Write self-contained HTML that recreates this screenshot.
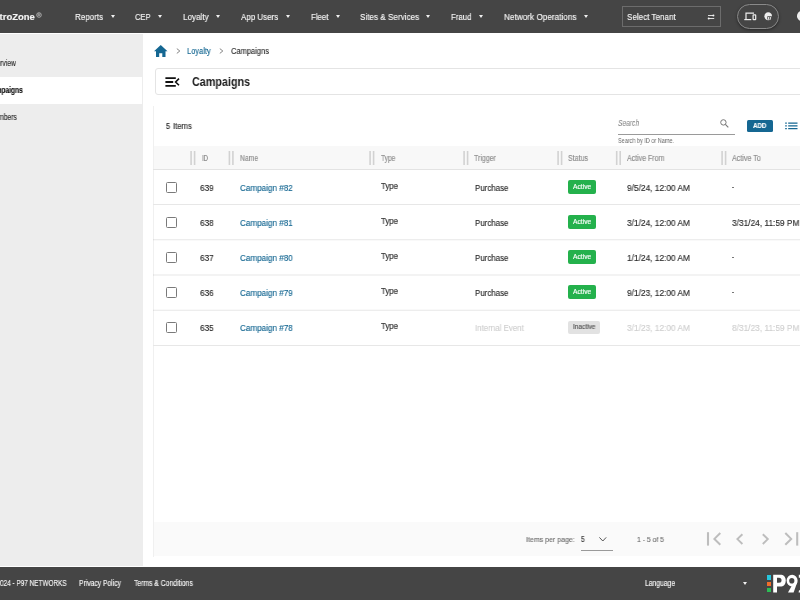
<!DOCTYPE html>
<html><head><meta charset="utf-8"><style>
html,body{margin:0;padding:0;}
body{width:800px;height:600px;overflow:hidden;position:relative;background:#fff;font-family:"Liberation Sans",sans-serif;}
.t{position:absolute;line-height:0;white-space:nowrap;font-family:"Liberation Sans",sans-serif;transform-origin:0 0;will-change:transform;}
.tri{position:absolute;width:0;height:0;border-left:2.2px solid transparent;border-right:2.2px solid transparent;border-top:3.2px solid #f0f0f0;}
</style></head><body>
<div style="position:absolute;left:0px;top:0px;width:800px;height:33px;background:#454545;"></div>
<div style="position:absolute;left:0px;top:34px;width:142.6px;height:532px;background:#ededed;"></div>
<div style="position:absolute;left:0px;top:77px;width:142px;height:27px;background:#fff;"></div>
<div style="position:absolute;left:0px;top:567px;width:800px;height:33px;background:#454545;"></div>
<div class="t" style="left:-11.79px;top:17.00px;font-size:9.45px;color:#f4f4f4;transform:scaleX(1.0044);font-weight:700;-webkit-text-stroke:0.15px #f4f4f4;">PetroZone</div>
<svg style="position:absolute;left:35.5px;top:12.3px" width="6" height="6" viewBox="0 0 6 6"><circle cx="3" cy="3" r="2.3" stroke="#ccc" stroke-width="0.7" fill="none"/><path d="M2.2 4.2V1.8h1a0.65 0.65 0 0 1 0 1.3h-1M3.1 3.1l0.9 1.1" stroke="#ccc" stroke-width="0.55" fill="none"/></svg>
<div class="t" style="left:74.70px;top:17.00px;font-size:9.74px;color:#f4f4f4;transform:scaleX(0.8243);-webkit-text-stroke:0.15px #f4f4f4;">Reports</div>
<div class="tri" style="left:110.9px;top:15px;"></div>
<div class="t" style="left:135.00px;top:17.00px;font-size:9.74px;color:#f4f4f4;transform:scaleX(0.7725);-webkit-text-stroke:0.15px #f4f4f4;">CEP</div>
<div class="tri" style="left:158px;top:15px;"></div>
<div class="t" style="left:182.50px;top:17.00px;font-size:9.74px;color:#f4f4f4;transform:scaleX(0.8340);-webkit-text-stroke:0.15px #f4f4f4;">Loyalty</div>
<div class="tri" style="left:215.75px;top:15px;"></div>
<div class="t" style="left:240.75px;top:17.00px;font-size:9.74px;color:#f4f4f4;transform:scaleX(0.8189);-webkit-text-stroke:0.15px #f4f4f4;">App Users</div>
<div class="tri" style="left:286.25px;top:15px;"></div>
<div class="t" style="left:310.50px;top:17.00px;font-size:9.74px;color:#f4f4f4;transform:scaleX(0.8057);-webkit-text-stroke:0.15px #f4f4f4;">Fleet</div>
<div class="tri" style="left:335.75px;top:15px;"></div>
<div class="t" style="left:360.00px;top:17.00px;font-size:9.74px;color:#f4f4f4;transform:scaleX(0.8356);-webkit-text-stroke:0.15px #f4f4f4;">Sites &amp; Services</div>
<div class="tri" style="left:426px;top:15px;"></div>
<div class="t" style="left:450.75px;top:17.00px;font-size:9.74px;color:#f4f4f4;transform:scaleX(0.8064);-webkit-text-stroke:0.15px #f4f4f4;">Fraud</div>
<div class="tri" style="left:479.25px;top:15px;"></div>
<div class="t" style="left:503.75px;top:17.00px;font-size:9.74px;color:#f4f4f4;transform:scaleX(0.8420);-webkit-text-stroke:0.15px #f4f4f4;">Network Operations</div>
<div class="tri" style="left:583.75px;top:15px;"></div>
<div style="position:absolute;left:621.5px;top:6px;width:99.5px;height:20.5px;border:1px solid #6c6c6c;box-sizing:border-box;"></div>
<div class="t" style="left:626.90px;top:17.00px;font-size:9.59px;color:#f4f4f4;transform:scaleX(0.8408);-webkit-text-stroke:0.15px #f4f4f4;">Select Tenant</div>
<svg style="position:absolute;left:706px;top:13px" width="10" height="8" viewBox="0 0 10 8"><path d="M2 2.5h5.8M2.4 5.5H8.2" stroke="#eee" stroke-width="0.9" fill="none"/><circle cx="7.4" cy="2.5" r="1" fill="#f4f4f4"/><circle cx="2.7" cy="5.5" r="1" fill="#f4f4f4"/></svg>
<div style="position:absolute;left:737.25px;top:3.75px;width:41.25px;height:25.25px;box-sizing:border-box;border:1px solid #8a8a8a;border-radius:13px;box-shadow:0 1px 3px rgba(0,0,0,0.45);background:#454545"></div>
<svg style="position:absolute;left:744px;top:12px" width="13" height="9" viewBox="0 0 13 9"><path d="M2 7V1.2h8" stroke="#eee" stroke-width="1.2" fill="none"/><path d="M0.3 7.6h7" stroke="#eee" stroke-width="1.2"/><rect x="9.1" y="2.8" width="2.6" height="4.9" rx="0.5" stroke="#eee" stroke-width="1.2" fill="none"/></svg>
<svg style="position:absolute;left:763.5px;top:12px" width="9" height="9" viewBox="0 0 9 9"><path d="M4.2 0.3C6.5 0.3 8 2 8 4.2 8 6.5 6.5 8.2 4.2 8.2 2 8.2 0.4 6.3 0.4 4.2 0.4 2 2 0.3 4.2 0.3Z" fill="#eee"/><path d="M3.3 4.3h4.6v3.2h-4.6z" fill="#454545"/><path d="M4.1 5.1h1v2.4h-1zM5.8 5.1h1v2.4h-1z" fill="#eee"/></svg>
<div style="position:absolute;left:797px;top:11.2px;width:9.5px;height:9.5px;border-radius:50%;background:#eee"></div>
<div class="t" style="left:-12.17px;top:64.00px;font-size:8.20px;color:#2a2a2a;transform:scaleX(0.8130);-webkit-text-stroke:0.15px #2a2a2a;">Overview</div>
<div class="t" style="left:-12.82px;top:91.00px;font-size:8.20px;color:#111;transform:scaleX(0.8105);font-weight:700;-webkit-text-stroke:0.15px #111;">Campaigns</div>
<div class="t" style="left:-10.80px;top:118.00px;font-size:8.20px;color:#2a2a2a;transform:scaleX(0.8130);-webkit-text-stroke:0.15px #2a2a2a;">Members</div>
<svg style="position:absolute;left:154px;top:44.8px" width="13.5" height="12" viewBox="0 0 13.5 12"><path d="M6.75 0L13.5 6.2h-2V12H8.3V8.2H5.2V12H2V6.2H0z" fill="#156792"/></svg>
<svg style="position:absolute;left:175.5px;top:48px" width="5" height="6" viewBox="0 0 5 6"><path d="M0.8 0.6l3 2.4-3 2.4" stroke="#777" stroke-width="0.9" fill="none"/></svg>
<div class="t" style="left:187.40px;top:51.00px;font-size:9.30px;color:#156792;transform:scaleX(0.8039);-webkit-text-stroke:0.15px #156792;">Loyalty</div>
<svg style="position:absolute;left:219.4px;top:48px" width="5" height="6" viewBox="0 0 5 6"><path d="M0.8 0.6l3 2.4-3 2.4" stroke="#777" stroke-width="0.9" fill="none"/></svg>
<div class="t" style="left:231.30px;top:51.00px;font-size:9.30px;color:#333;transform:scaleX(0.8054);-webkit-text-stroke:0.15px #333;">Campaigns</div>
<div style="position:absolute;left:154.5px;top:68px;width:665.5px;height:26.599999999999994px;border:1px solid #e4e4e4;border-radius:3px;box-sizing:border-box;"></div>
<svg style="position:absolute;left:165px;top:77px" width="15" height="11" viewBox="0 0 15 11"><path d="M0.4 1.1h10.4M0.4 5.0h7.8M0.4 8.9h10.4" stroke="#111" stroke-width="1.8"/><path d="M14 1.6L10.6 5.0 14 8.3" stroke="#111" stroke-width="1.6" fill="none"/></svg>
<div class="t" style="left:191.80px;top:82.00px;font-size:11.92px;color:#1a1a1a;transform:scaleX(0.9059);font-weight:700;">Campaigns</div>
<div style="position:absolute;left:153px;top:106px;width:1px;height:451px;background:#f0f0f0;"></div>
<div class="t" style="left:165.90px;top:126.00px;font-size:8.43px;color:#2a2a2a;transform:scaleX(0.8685);-webkit-text-stroke:0.15px #2a2a2a;">5</div>
<div class="t" style="left:173.40px;top:126.00px;font-size:8.43px;color:#2a2a2a;transform:scaleX(0.9091);-webkit-text-stroke:0.15px #2a2a2a;">Items</div>
<div class="t" style="left:617.80px;top:123.00px;font-size:8.58px;color:#858585;transform:scaleX(0.7758);font-style:italic;-webkit-text-stroke:0.05px #858585;">Search</div>
<svg style="position:absolute;left:720px;top:118.8px" width="9" height="9" viewBox="0 0 9 9"><circle cx="3.4" cy="3.4" r="2.7" stroke="#777" stroke-width="1" fill="none"/><path d="M5.4 5.4L8.3 8.3" stroke="#777" stroke-width="1.1"/></svg>
<div style="position:absolute;left:617.8px;top:133.5px;width:117.40000000000009px;height:1.0px;background:#9a9a9a;"></div>
<div class="t" style="left:617.80px;top:141.00px;font-size:7.27px;color:#6a6a6a;transform:scaleX(0.7588);">Search by ID or Name.</div>
<div style="position:absolute;left:746.8px;top:119.9px;width:25.8px;height:11.9px;background:#156792;border-radius:1.5px"></div>
<div class="t" style="left:752.90px;top:126.00px;font-size:6.83px;color:#fff;transform:scaleX(0.9041);font-weight:700;-webkit-text-stroke:0.15px #fff;">ADD</div>
<svg style="position:absolute;left:785px;top:122px" width="13" height="8" viewBox="0 0 13 8"><path d="M0.2 1.1h1.6M0.2 3.85h1.6M0.2 6.6h1.6M3.2 1.1h9.3M3.2 3.85h9.3M3.2 6.6h9.3" stroke="#156792" stroke-width="1.15"/></svg>
<div style="position:absolute;left:153.6px;top:146.3px;width:646.4px;height:22.69999999999999px;background:#f8f8f8;"></div>
<div style="position:absolute;left:153.3px;top:169px;width:646.7px;height:1px;background:#e3e3e3;"></div>
<svg style="position:absolute;left:150px;top:0px" width="650" height="170" viewBox="0 0 650 170"><rect x="40.30" y="151" width="1.6" height="14" fill="#d2d2d2"/><rect x="43.80" y="151" width="1.6" height="14" fill="#d2d2d2"/><rect x="78.60" y="151" width="1.6" height="14" fill="#d2d2d2"/><rect x="82.10" y="151" width="1.6" height="14" fill="#d2d2d2"/><rect x="219.30" y="151" width="1.6" height="14" fill="#d2d2d2"/><rect x="222.80" y="151" width="1.6" height="14" fill="#d2d2d2"/><rect x="313.30" y="151" width="1.6" height="14" fill="#d2d2d2"/><rect x="316.80" y="151" width="1.6" height="14" fill="#d2d2d2"/><rect x="407.30" y="151" width="1.6" height="14" fill="#d2d2d2"/><rect x="410.80" y="151" width="1.6" height="14" fill="#d2d2d2"/><rect x="465.90" y="151" width="1.6" height="14" fill="#d2d2d2"/><rect x="469.40" y="151" width="1.6" height="14" fill="#d2d2d2"/><rect x="571.30" y="151" width="1.6" height="14" fill="#d2d2d2"/><rect x="574.80" y="151" width="1.6" height="14" fill="#d2d2d2"/></svg>
<div class="t" style="left:202.00px;top:159.00px;font-size:8.28px;color:#8c8c8c;transform:scaleX(0.7246);-webkit-text-stroke:0.15px #8c8c8c;">ID</div>
<div class="t" style="left:239.80px;top:159.00px;font-size:8.28px;color:#8c8c8c;transform:scaleX(0.8232);-webkit-text-stroke:0.15px #8c8c8c;">Name</div>
<div class="t" style="left:381.00px;top:159.00px;font-size:8.28px;color:#8c8c8c;transform:scaleX(0.8014);-webkit-text-stroke:0.15px #8c8c8c;">Type</div>
<div class="t" style="left:474.40px;top:159.00px;font-size:8.28px;color:#8c8c8c;transform:scaleX(0.8489);-webkit-text-stroke:0.15px #8c8c8c;">Trigger</div>
<div class="t" style="left:568.00px;top:159.00px;font-size:8.28px;color:#8c8c8c;transform:scaleX(0.8535);-webkit-text-stroke:0.15px #8c8c8c;">Status</div>
<div class="t" style="left:626.60px;top:159.00px;font-size:8.28px;color:#8c8c8c;transform:scaleX(0.8474);-webkit-text-stroke:0.15px #8c8c8c;">Active From</div>
<div class="t" style="left:732.10px;top:159.00px;font-size:8.28px;color:#8c8c8c;transform:scaleX(0.8610);-webkit-text-stroke:0.15px #8c8c8c;">Active To</div>
<div style="position:absolute;left:153.3px;top:204px;width:646.7px;height:1px;background:#e7e7e7;"></div>
<div style="position:absolute;left:165.8px;top:182px;width:11.2px;height:11.2px;box-sizing:border-box;border:1.4px solid #7a7a7a;border-radius:1.5px"></div>
<div class="t" style="left:200.00px;top:188.00px;font-size:9.30px;color:#2a2a2a;transform:scaleX(0.8851);-webkit-text-stroke:0.15px #2a2a2a;">639</div>
<div class="t" style="left:239.80px;top:188.00px;font-size:9.30px;color:#156792;transform:scaleX(0.8716);-webkit-text-stroke:0.15px #156792;">Campaign #82</div>
<div class="t" style="left:381.00px;top:186.00px;font-size:9.30px;color:#333;transform:scaleX(0.8422);-webkit-text-stroke:0.2px #333;">Type</div>
<div class="t" style="left:474.60px;top:188.00px;font-size:9.30px;color:#2a2a2a;transform:scaleX(0.8508);-webkit-text-stroke:0.15px #2a2a2a;">Purchase</div>
<div style="position:absolute;left:568px;top:180.4px;width:27.6px;height:13.2px;background:#24b14c;border-radius:2px"></div>
<div class="t" style="left:573.00px;top:187.00px;font-size:6.69px;color:#fff;transform:scaleX(0.9898);-webkit-text-stroke:0.15px #fff;">Active</div>
<div class="t" style="left:627.00px;top:188.00px;font-size:9.30px;color:#2a2a2a;transform:scaleX(0.8958);-webkit-text-stroke:0.15px #2a2a2a;">9/5/24, 12:00 AM</div>
<div style="position:absolute;left:732.4px;top:187px;width:1.8999999999999773px;height:1px;background:#777;"></div>
<div style="position:absolute;left:153.3px;top:239px;width:646.7px;height:1px;background:rgba(0,0,0,0.071);"></div>
<div style="position:absolute;left:153.3px;top:240px;width:646.7px;height:1px;background:rgba(0,0,0,0.024);"></div>
<div style="position:absolute;left:165.8px;top:217px;width:11.2px;height:11.2px;box-sizing:border-box;border:1.4px solid #7a7a7a;border-radius:1.5px"></div>
<div class="t" style="left:200.00px;top:223.00px;font-size:9.30px;color:#2a2a2a;transform:scaleX(0.8851);-webkit-text-stroke:0.15px #2a2a2a;">638</div>
<div class="t" style="left:239.80px;top:223.00px;font-size:9.30px;color:#156792;transform:scaleX(0.8716);-webkit-text-stroke:0.15px #156792;">Campaign #81</div>
<div class="t" style="left:381.00px;top:221.00px;font-size:9.30px;color:#333;transform:scaleX(0.8422);-webkit-text-stroke:0.2px #333;">Type</div>
<div class="t" style="left:474.60px;top:223.00px;font-size:9.30px;color:#2a2a2a;transform:scaleX(0.8508);-webkit-text-stroke:0.15px #2a2a2a;">Purchase</div>
<div style="position:absolute;left:568px;top:215.4px;width:27.6px;height:13.2px;background:#24b14c;border-radius:2px"></div>
<div class="t" style="left:573.00px;top:222.00px;font-size:6.69px;color:#fff;transform:scaleX(0.9898);-webkit-text-stroke:0.15px #fff;">Active</div>
<div class="t" style="left:627.00px;top:223.00px;font-size:9.30px;color:#2a2a2a;transform:scaleX(0.8958);-webkit-text-stroke:0.15px #2a2a2a;">3/1/24, 12:00 AM</div>
<div class="t" style="left:732.10px;top:223.00px;font-size:9.30px;color:#2a2a2a;transform:scaleX(0.8958);-webkit-text-stroke:0.15px #2a2a2a;">3/31/24, 11:59 PM</div>
<div style="position:absolute;left:153.3px;top:274px;width:646.7px;height:1px;background:rgba(0,0,0,0.047);"></div>
<div style="position:absolute;left:153.3px;top:275px;width:646.7px;height:1px;background:rgba(0,0,0,0.047);"></div>
<div style="position:absolute;left:165.8px;top:252px;width:11.2px;height:11.2px;box-sizing:border-box;border:1.4px solid #7a7a7a;border-radius:1.5px"></div>
<div class="t" style="left:200.00px;top:258.00px;font-size:9.30px;color:#2a2a2a;transform:scaleX(0.8851);-webkit-text-stroke:0.15px #2a2a2a;">637</div>
<div class="t" style="left:239.80px;top:258.00px;font-size:9.30px;color:#156792;transform:scaleX(0.8716);-webkit-text-stroke:0.15px #156792;">Campaign #80</div>
<div class="t" style="left:381.00px;top:256.00px;font-size:9.30px;color:#333;transform:scaleX(0.8422);-webkit-text-stroke:0.2px #333;">Type</div>
<div class="t" style="left:474.60px;top:258.00px;font-size:9.30px;color:#2a2a2a;transform:scaleX(0.8508);-webkit-text-stroke:0.15px #2a2a2a;">Purchase</div>
<div style="position:absolute;left:568px;top:250.4px;width:27.6px;height:13.2px;background:#24b14c;border-radius:2px"></div>
<div class="t" style="left:573.00px;top:257.00px;font-size:6.69px;color:#fff;transform:scaleX(0.9898);-webkit-text-stroke:0.15px #fff;">Active</div>
<div class="t" style="left:627.00px;top:258.00px;font-size:9.30px;color:#2a2a2a;transform:scaleX(0.8958);-webkit-text-stroke:0.15px #2a2a2a;">1/1/24, 12:00 AM</div>
<div style="position:absolute;left:732.4px;top:257px;width:1.8999999999999773px;height:1px;background:#777;"></div>
<div style="position:absolute;left:153.3px;top:309px;width:646.7px;height:1px;background:rgba(0,0,0,0.024);"></div>
<div style="position:absolute;left:153.3px;top:310px;width:646.7px;height:1px;background:rgba(0,0,0,0.071);"></div>
<div style="position:absolute;left:165.8px;top:287px;width:11.2px;height:11.2px;box-sizing:border-box;border:1.4px solid #7a7a7a;border-radius:1.5px"></div>
<div class="t" style="left:200.00px;top:293.00px;font-size:9.30px;color:#2a2a2a;transform:scaleX(0.8851);-webkit-text-stroke:0.15px #2a2a2a;">636</div>
<div class="t" style="left:239.80px;top:293.00px;font-size:9.30px;color:#156792;transform:scaleX(0.8716);-webkit-text-stroke:0.15px #156792;">Campaign #79</div>
<div class="t" style="left:381.00px;top:291.00px;font-size:9.30px;color:#333;transform:scaleX(0.8422);-webkit-text-stroke:0.2px #333;">Type</div>
<div class="t" style="left:474.60px;top:293.00px;font-size:9.30px;color:#2a2a2a;transform:scaleX(0.8508);-webkit-text-stroke:0.15px #2a2a2a;">Purchase</div>
<div style="position:absolute;left:568px;top:285.4px;width:27.6px;height:13.2px;background:#24b14c;border-radius:2px"></div>
<div class="t" style="left:573.00px;top:292.00px;font-size:6.69px;color:#fff;transform:scaleX(0.9898);-webkit-text-stroke:0.15px #fff;">Active</div>
<div class="t" style="left:627.00px;top:293.00px;font-size:9.30px;color:#2a2a2a;transform:scaleX(0.8958);-webkit-text-stroke:0.15px #2a2a2a;">9/1/23, 12:00 AM</div>
<div style="position:absolute;left:732.4px;top:292px;width:1.8999999999999773px;height:1px;background:#777;"></div>
<div style="position:absolute;left:153.3px;top:345px;width:646.7px;height:1px;background:#e7e7e7;"></div>
<div style="position:absolute;left:165.8px;top:322px;width:11.2px;height:11.2px;box-sizing:border-box;border:1.4px solid #7a7a7a;border-radius:1.5px"></div>
<div class="t" style="left:200.00px;top:328.00px;font-size:9.30px;color:#2a2a2a;transform:scaleX(0.8851);-webkit-text-stroke:0.15px #2a2a2a;">635</div>
<div class="t" style="left:239.80px;top:328.00px;font-size:9.30px;color:#156792;transform:scaleX(0.8716);-webkit-text-stroke:0.15px #156792;">Campaign #78</div>
<div class="t" style="left:381.00px;top:326.00px;font-size:9.30px;color:#333;transform:scaleX(0.8422);-webkit-text-stroke:0.2px #333;">Type</div>
<div class="t" style="left:474.60px;top:328.00px;font-size:9.30px;color:#cfcfcf;transform:scaleX(0.8508);-webkit-text-stroke:0.15px #cfcfcf;">Internal Event</div>
<div style="position:absolute;left:568px;top:320.8px;width:32px;height:13.4px;background:#e2e2e2;border-radius:2px"></div>
<div class="t" style="left:572.60px;top:327.00px;font-size:6.69px;color:#555;transform:scaleX(0.9705);-webkit-text-stroke:0.15px #555;">Inactive</div>
<div class="t" style="left:627.00px;top:328.00px;font-size:9.30px;color:#cfcfcf;transform:scaleX(0.8958);-webkit-text-stroke:0.15px #cfcfcf;">3/1/23, 12:00 AM</div>
<div class="t" style="left:732.10px;top:328.00px;font-size:9.30px;color:#cfcfcf;transform:scaleX(0.8958);-webkit-text-stroke:0.15px #cfcfcf;">8/31/23, 11:59 PM</div>
<div style="position:absolute;left:153.6px;top:521.6px;width:646.4px;height:34.39999999999998px;background:#fafafa;"></div>
<div class="t" style="left:525.60px;top:540.00px;font-size:7.99px;color:#707070;transform:scaleX(0.8788);-webkit-text-stroke:0.15px #707070;">Items per page:</div>
<div class="t" style="left:581.30px;top:540.00px;font-size:8.14px;color:#3a3a3a;transform:scaleX(0.8336);-webkit-text-stroke:0.15px #3a3a3a;">5</div>
<svg style="position:absolute;left:599px;top:537px" width="8" height="5" viewBox="0 0 8 5"><path d="M0.4 0.4l3.4 3.6 3.4-3.6" stroke="#555" stroke-width="1" fill="none"/></svg>
<div style="position:absolute;left:581px;top:550px;width:32px;height:1px;background:#9a9a9a;"></div>
<div class="t" style="left:637.00px;top:540.00px;font-size:7.99px;color:#707070;transform:scaleX(0.8555);-webkit-text-stroke:0.15px #707070;">1 - 5 of 5</div>
<svg style="position:absolute;left:700px;top:528px" width="100" height="22" viewBox="0 0 100 22">
<path d="M8 4.2v13.4" stroke="#bdbdbd" stroke-width="2.1"/>
<path d="M20.3 5L14.4 10.9l5.9 5.9" stroke="#bdbdbd" stroke-width="2" fill="none"/>
<path d="M42.4 6.3L37.4 11.1l5 4.9" stroke="#bdbdbd" stroke-width="1.9" fill="none"/>
<path d="M62.8 6.3l5 4.8-5 4.9" stroke="#bdbdbd" stroke-width="1.9" fill="none"/>
<path d="M85.3 5l5.9 5.9-5.9 5.9" stroke="#bdbdbd" stroke-width="2" fill="none"/>
<path d="M97.2 4.2v13.4" stroke="#bdbdbd" stroke-width="2.1"/>
</svg>
<div class="t" style="left:-9.83px;top:584.00px;font-size:8.14px;color:#f4f4f4;transform:scaleX(0.7882);-webkit-text-stroke:0.15px #f4f4f4;">© 2024 - P97 NETWORKS</div>
<div class="t" style="left:78.75px;top:584.00px;font-size:8.14px;color:#f4f4f4;transform:scaleX(0.8285);-webkit-text-stroke:0.15px #f4f4f4;">Privacy Policy</div>
<div class="t" style="left:133.80px;top:584.00px;font-size:8.14px;color:#f4f4f4;transform:scaleX(0.8346);-webkit-text-stroke:0.15px #f4f4f4;">Terms &amp; Conditions</div>
<div class="t" style="left:644.90px;top:584.00px;font-size:8.14px;color:#f4f4f4;transform:scaleX(0.8337);-webkit-text-stroke:0.15px #f4f4f4;">Language</div>
<div class="tri" style="left:743.3px;top:582.4px;"></div>
<div style="position:absolute;left:767px;top:575px;width:4px;height:4.75px;background:#27c6dd;"></div>
<div style="position:absolute;left:767px;top:581.5px;width:4px;height:4.25px;background:#f26d2b;"></div>
<div style="position:absolute;left:767px;top:588px;width:4px;height:4.25px;background:#2dbd55;"></div>
<svg style="position:absolute;left:770px;top:572px" width="30" height="24" viewBox="0 0 30 24"><path fill="#fff" fill-rule="evenodd" d="M3.2 2.8H11.5A4.3 5.8 0 0 1 11.5 14.4H7V20.4H3.2Z M7 5.8H9A2.55 2.5 0 0 1 9 10.8H7Z"/><path fill="#fff" fill-rule="evenodd" d="M22.1 2.8A5.5 5.8 0 1 1 22.1 14.4A5.5 5.8 0 1 1 22.1 2.8Z M21.8 6A2.6 2.8 0 1 0 21.8 11.6A2.6 2.8 0 1 0 21.8 6Z"/><path fill="#fff" d="M27.5 9.5L23.6 20.4H18L22.3 12.8Z"/><path fill="#fff" d="M28.8 2.8H30V5.8H28.8Z M29 18.2H30V20.4H28.6Z"/></svg>
</body></html>
